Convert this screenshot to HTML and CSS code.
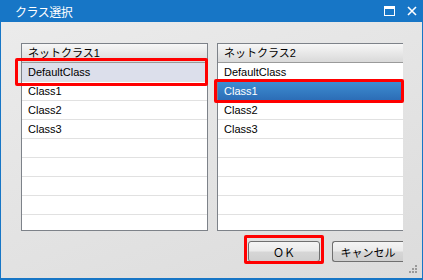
FILE: index.html
```html
<!DOCTYPE html>
<html lang="ja">
<head>
    <meta charset="UTF-8">
    <title>クラス選択</title>
    <link rel="stylesheet" href="styles.css">
</head>
<body>
    <div class="window">
        <div class="titlebar">
            <span class="title">クラス選択</span>
            <span class="controls">
                <svg class="ctl" width="11" height="10" viewBox="0 0 11 10">
                    <rect x="0.5" y="0.5" width="10" height="9" fill="none" stroke="#fff" stroke-width="1"/>
                    <rect x="0" y="0" width="11" height="3" fill="#fff"/>
                </svg>
                <svg class="ctl" width="10" height="10" viewBox="0 0 10 10">
                    <path d="M1 1 L9 9 M9 1 L1 9" stroke="#fff" stroke-width="1.6"/>
                </svg>
            </span>
        </div>

        <div class="content">
            <div class="lists">
                <div class="list">
                    <div class="list-header">ネットクラス1</div>
                    <div class="row soft">DefaultClass</div>
                    <div class="row">Class1</div>
                    <div class="row">Class2</div>
                    <div class="row">Class3</div>
                    <div class="row"></div>
                    <div class="row"></div>
                    <div class="row"></div>
                    <div class="row"></div>
                    <div class="row last"></div>
                </div>
                <div class="list open">
                    <div class="list-header">ネットクラス2</div>
                    <div class="row">DefaultClass</div>
                    <div class="row active">Class1</div>
                    <div class="row">Class2</div>
                    <div class="row">Class3</div>
                    <div class="row"></div>
                    <div class="row"></div>
                    <div class="row"></div>
                    <div class="row"></div>
                    <div class="row last"></div>
                </div>
            </div>

            <div class="buttons">
                <button class="btn">ＯＫ</button>
                <button class="btn">キャンセル</button>
            </div>
        </div>

        <svg class="grip" width="10" height="10" viewBox="0 0 10 10">
            <rect x="7" y="1" width="2" height="2" fill="#9a9a9a"/>
            <rect x="4" y="4" width="2" height="2" fill="#9a9a9a"/>
            <rect x="7" y="4" width="2" height="2" fill="#9a9a9a"/>
            <rect x="1" y="7" width="2" height="2" fill="#9a9a9a"/>
            <rect x="4" y="7" width="2" height="2" fill="#9a9a9a"/>
            <rect x="7" y="7" width="2" height="2" fill="#9a9a9a"/>
        </svg>

        <!-- annotation frames -->
        <div class="mark mark-left"></div>
        <div class="mark mark-right"></div>
        <div class="mark mark-ok"></div>
    </div>
</body>
</html>
```

FILE: styles.css
```css
body {
    margin: 0;
    font-family: "Liberation Sans", "Noto Sans CJK JP", sans-serif;
    font-size: 11px;
    color: #000;
}
.window {
    position: relative;
    width: 423px;
    height: 280px;
    box-sizing: border-box;
    border: 1px solid #1776c6;
    border-top: none;
    border-bottom-width: 2px;
    background: linear-gradient(160deg, #ececec 0%, #dcdcdc 100%);
    overflow: hidden;
}
.titlebar {
    height: 22px;
    margin: 0 -1px;
    background-color: #1776c6;
    color: #fff;
    display: flex;
    align-items: center;
    justify-content: space-between;
    padding: 0 6px 0 15px;
}
.title {
    font-size: 12px;
    letter-spacing: -0.5px;
}
.controls {
    display: flex;
    align-items: center;
    gap: 12px;
}
.ctl {
    display: block;
}
.content {
    padding: 21px 19px 0 20px;
}
.lists {
    display: grid;
    grid-template-columns: 187px 1fr;
    gap: 9px;
}
.list {
    height: 186px;
    background-color: #fff;
    border: 1px solid #7d8289;
    overflow: hidden;
}
.list.open {
    border-right: none;
}
.list-header {
    height: 18px;
    line-height: 18px;
    padding-left: 6px;
    background: linear-gradient(#f7f7f7, #d9d9d9);
    border-bottom: 1px solid #9a9a9a;
}
.row {
    height: 18px;
    line-height: 18px;
    padding-left: 6px;
    border-bottom: 1px solid #e1e1e1;
}
.row.last {
    border-bottom: none;
}
.row.soft {
    background-color: #dcdfeb;
}
.row.active {
    color: #fff;
    background: linear-gradient(#3d8dd2, #2c6db6);
}
.buttons {
    display: flex;
    justify-content: flex-end;
    gap: 12px;
    margin-top: 10px;
}
.btn {
    height: 21px;
    width: 72px;
    box-sizing: border-box;
    border: 1px solid #6f6f6f;
    border-radius: 3px;
    background: linear-gradient(#f4f4f4 0%, #ebebeb 45%, #d6d6d6 55%, #cfcfcf 100%);
    font-family: "Liberation Sans", "Noto Sans CJK JP", sans-serif;
    font-size: 11px;
    color: #000;
    padding: 0;
}
.btn:last-child {
    width: 71px;
    border-right: none;
    border-radius: 3px 0 0 3px;
}
.grip {
    position: absolute;
    right: 4px;
    bottom: 4px;
}
.mark {
    position: absolute;
    border: 3px solid #ff0000;
    border-radius: 2px;
    box-sizing: border-box;
}
.mark-left {
    left: 14px;
    top: 58px;
    width: 193px;
    height: 28px;
}
.mark-right {
    left: 213px;
    top: 79px;
    width: 190px;
    height: 24px;
}
.mark-ok {
    left: 243px;
    top: 235px;
    width: 80px;
    height: 29px;
}
```
